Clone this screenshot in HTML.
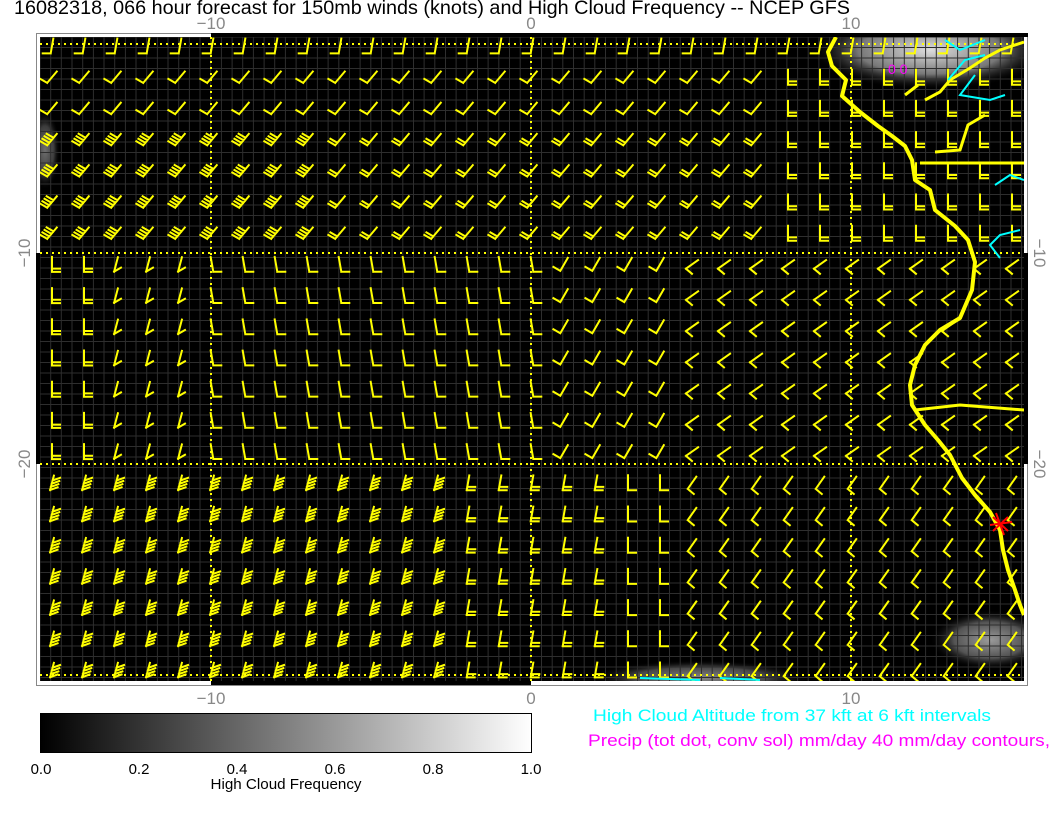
<!DOCTYPE html><html><head><meta charset="utf-8"><style>
body{margin:0;background:#fff;width:1056px;height:816px;overflow:hidden;font-family:"Liberation Sans",sans-serif}
</style></head><body>
<svg id="s" width="1056" height="816" xmlns="http://www.w3.org/2000/svg" font-family="Liberation Sans, sans-serif">
<defs>
<linearGradient id="cb" x1="0" x2="1"><stop offset="0" stop-color="#000"/><stop offset="1" stop-color="#fff"/></linearGradient>
<radialGradient id="cl" cx="0.5" cy="0.5" r="0.5"><stop offset="0" stop-color="#ddd"/><stop offset="0.6" stop-color="#777"/><stop offset="1" stop-color="#000" stop-opacity="0"/></radialGradient>
<clipPath id="pc"><rect x="40" y="37" width="984" height="644"/></clipPath>
</defs>
<text x="14" y="14" font-size="19" fill="#000" textLength="836" lengthAdjust="spacingAndGlyphs">16082318, 066 hour forecast for 150mb winds (knots) and High Cloud Frequency -- NCEP GFS</text>
<rect x="36.5" y="33.5" width="991" height="652" fill="#fff" stroke="#888"/>
<rect x="40" y="37" width="984" height="644" fill="#000"/>
<g clip-path="url(#pc)">
<ellipse cx="930" cy="50" rx="120" ry="40" fill="url(#cl)"/>
<ellipse cx="990" cy="640" rx="60" ry="30" fill="url(#cl)" opacity=".7"/>
<ellipse cx="700" cy="678" rx="110" ry="18" fill="url(#cl)" opacity=".6"/>
<ellipse cx="45" cy="150" rx="15" ry="40" fill="url(#cl)" opacity=".5"/>
<g id="grid" stroke="#2e2e2e" stroke-width="1"></g>
<g id="barbs" stroke="#ff0" stroke-width="2" fill="none" stroke-linecap="square" stroke-linejoin="miter"></g>
<g stroke="#ff0" stroke-width="2" stroke-dasharray="2 4" fill="none">
<path d="M40 44H1024M40 253H1024M40 464H1024M40 675H1024M211 37V681M531 37V681M851 37V681"/>
</g>
<path d="M836 37 L828 52 L832 66 L846 80 L842 96 L860 112 L878 126 L892 136 L905 146 L912 160 L915 180 L930 190 L935 210 L955 226 L968 240 L975 262 L972 290 L960 318 L940 330 L925 345 L915 365 L910 385 L912 405 L925 425 L938 440 L950 455 L962 478 L975 495 L990 512 L1000 530 L1003 550 L1008 570 L1015 590 L1020 605 L1024 615" stroke="#ff0" stroke-width="4" fill="none" stroke-linejoin="round"/>
<path d="M925 100 L940 92 L950 80 L970 68 L985 58 L1000 50 L1024 42 M920 163 L1024 163 M915 410 L960 405 L1024 410 M935 152 L960 150 L968 125 L985 115 M905 95 L918 85" stroke="#ff0" stroke-width="3" fill="none"/>
<path d="M945 40 L960 50 L985 40 M948 80 L965 60 L985 55 M975 75 L960 95 L990 100 L1005 95 M995 185 L1010 175 L1024 180 M1000 258 L990 245 L1000 235 L1020 230" stroke="#0ff" stroke-width="2" fill="none"/>
<path d="M996 513 L1004 535 M990 525 L1012 522 M993 517 L1008 531 M993 531 L1008 517" stroke="#f00" stroke-width="2"/>
<path d="M640 678 L700 680 M720 678 L760 680" stroke="#0ff" stroke-width="2"/>
<text x="888" y="74" fill="#f0f" font-size="14">0 0</text>
</g>
<rect x="211" y="33" width="817" height="4" fill="#000"/>
<rect x="211" y="681" width="320" height="4" fill="#000"/>
<rect x="1024" y="253" width="4" height="211" fill="#000"/>
<rect x="36" y="253" width="4" height="211" fill="#000"/>
<g fill="#888" font-size="17" text-anchor="middle">
<text x="211" y="29">−10</text><text x="531" y="29">0</text><text x="851" y="29">10</text>
<text x="211" y="704">−10</text><text x="531" y="704">0</text><text x="851" y="704">10</text>
<text transform="translate(30,253) rotate(-90)">−10</text>
<text transform="translate(30,464) rotate(-90)">−20</text>
<text transform="translate(1034,253) rotate(90)">−10</text>
<text transform="translate(1034,464) rotate(90)">−20</text>
</g>
<rect x="40.5" y="713.5" width="491" height="39" fill="url(#cb)" stroke="#000"/>
<g font-size="15" fill="#000" text-anchor="middle">
<text x="41" y="774">0.0</text><text x="139" y="774">0.2</text><text x="237" y="774">0.4</text><text x="335" y="774">0.6</text><text x="433" y="774">0.8</text><text x="531" y="774">1.0</text>
<text x="286" y="789" textLength="151" lengthAdjust="spacingAndGlyphs">High Cloud Frequency</text>
</g>
<text x="593" y="721" font-size="17" fill="#0ff" textLength="398" lengthAdjust="spacingAndGlyphs">High Cloud Altitude from 37 kft at 6 kft intervals</text>
<text x="588" y="746" font-size="17" fill="#f0f" textLength="462" lengthAdjust="spacingAndGlyphs">Precip (tot dot, conv sol) mm/day 40 mm/day contours,</text>
</svg>
<script>
var NS="http://www.w3.org/2000/svg";
var g=document.getElementById("grid"),d="";
for(var x=40;x<=1024;x+=10.67)d+="M"+x.toFixed(1)+" 37V681";
for(var y=37;y<=681;y+=10.5)d+="M40 "+y.toFixed(1)+"H1024";
var p=document.createElementNS(NS,"path");p.setAttribute("d",d);g.appendChild(p);
var bd="";
function R(a){return a*Math.PI/180}
function barb(cx,cy,sa,ba,n,L){
 L=L||15;var s=R(sa),b=R(ba);
 var tx=cx-Math.cos(s)*L/2,ty=cy-Math.sin(s)*L/2,hx=tx+Math.cos(s)*L,hy=ty+Math.sin(s)*L;
 bd+="M"+tx.toFixed(1)+" "+ty.toFixed(1)+"L"+hx.toFixed(1)+" "+hy.toFixed(1);
 for(var k=0;k<n;k++){var t=k*0.22,sx=tx+(hx-tx)*t,sy=ty+(hy-ty)*t;
  bd+="M"+sx.toFixed(1)+" "+sy.toFixed(1)+"l"+(Math.cos(b)*8).toFixed(1)+" "+(Math.sin(b)*8).toFixed(1);}
}
for(var r=0;r<21;r++)for(var c=0;c<31;c++){
 var cx=52+c*32,cy=46+r*31.2;
 if(cx>1012)continue;
 if(r==0){barb(cx,cy,-80,180,1);continue;}
 if(r<=6){
  if(c<=22){var n=(r>=3&&c<=8)?4:(r>=3?2:1);barb(cx,cy,-50,-150,n);}
  else barb(cx,cy,-90,0,2);
 } else if(r<=13){
  if(c<=1)barb(cx,cy,-90,0,2);
  else if(c<=4)barb(cx,cy,-75,-30,1);
  else if(c<=15)barb(cx,cy,-100,0,1);
  else if(c<=19)barb(cx,cy,-60,-150,1);
  else barb(cx,cy,-35,40,1);
 } else {
  if(c<=12)barb(cx,cy,-75,-20,4);
  else if(c<=17)barb(cx,cy,-80,0,2);
  else if(c<=19)barb(cx,cy,-90,0,1);
  else barb(cx,cy,-55,40,1);
 }
}
var q=document.createElementNS(NS,"path");q.setAttribute("d",bd);document.getElementById("barbs").appendChild(q);
</script>
</body></html>
